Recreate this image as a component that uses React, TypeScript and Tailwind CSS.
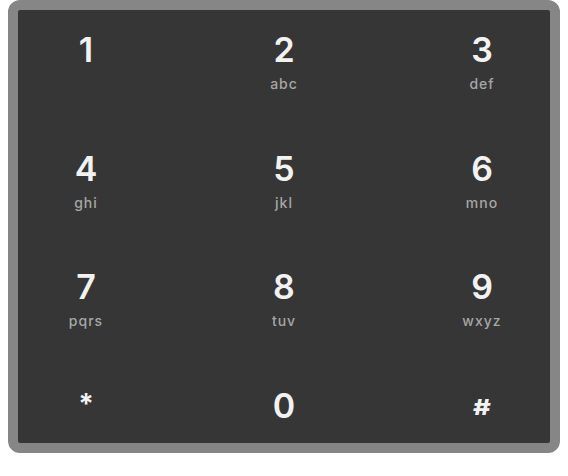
const keys = [
  { d: "1", l: "" },
  { d: "2", l: "abc" },
  { d: "3", l: "def" },
  { d: "4", l: "ghi" },
  { d: "5", l: "jkl" },
  { d: "6", l: "mno" },
  { d: "7", l: "pqrs" },
  { d: "8", l: "tuv" },
  { d: "9", l: "wxyz" },
  { d: "*", l: "" },
  { d: "0", l: "" },
  { d: "#", l: "" },
];

function Key({ d, l }: { d: string; l: string }) {
  let cls = "h-[34px] leading-none text-[34px] font-semibold text-[#f2f2f2]";
  if (d === "*") cls = "h-[34px] leading-none text-[28px] font-bold text-[#f2f2f2] pt-[1px]";
  if (d === "#") cls = "h-[34px] leading-none text-[21px] font-extrabold text-[#f2f2f2] pt-[8px] scale-x-[130%]";
  return (
    <div className="w-[100px] flex flex-col items-center">
      <div className={cls}>{d}</div>
      {l && (
        <div className="mt-[9px] text-[14px] leading-[16px] font-medium tracking-[1px] text-[#a6a6a6]">
          {l}
        </div>
      )}
    </div>
  );
}

export default function App() {
  const rows = [0, 1, 2, 3].map((r) => keys.slice(r * 3, r * 3 + 3));
  return (
    <div className="w-[568px] h-[476px] bg-white px-[8px]" style={{ fontFamily: "Inter, 'Noto Sans', sans-serif" }}>
      <div className="w-[552px] h-[453px] rounded-[12px] border-[10px] border-[#868686] bg-[#363636] px-[18px] pt-[23px] overflow-hidden">
        {rows.map((row, i) => (
          <div key={i} className={i < 3 ? "h-[118.5px] flex justify-between" : "flex justify-between"}>
            {row.map((k) => (
              <Key key={k.d} d={k.d} l={k.l} />
            ))}
          </div>
        ))}
      </div>
    </div>
  );
}
